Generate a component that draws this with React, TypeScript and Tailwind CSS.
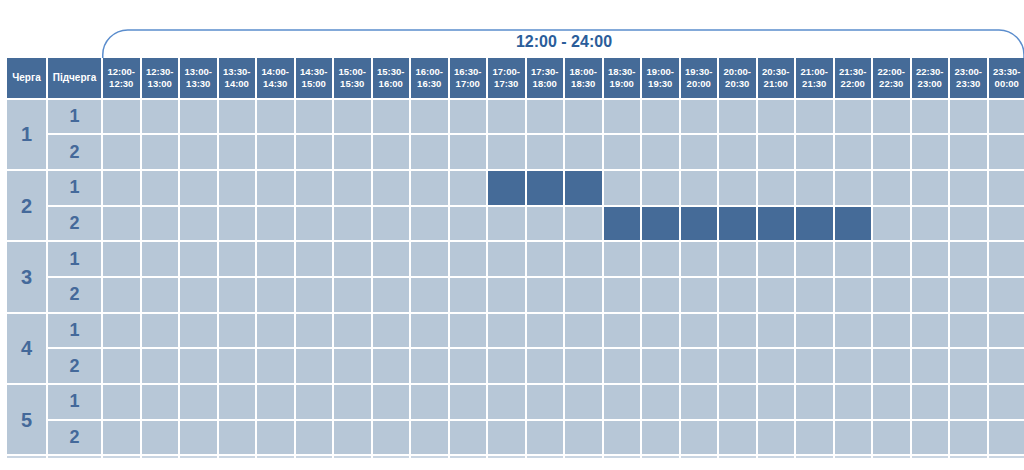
import React from "react";

const times = [
  "12:00", "12:30", "13:00", "13:30", "14:00", "14:30", "15:00", "15:30",
  "16:00", "16:30", "17:00", "17:30", "18:00", "18:30", "19:00", "19:30",
  "20:00", "20:30", "21:00", "21:30", "22:00", "22:30", "23:00", "23:30", "00:00",
];

const dark: Record<string, number[]> = {
  "2-1": [10, 11, 12],
  "2-2": [13, 14, 15, 16, 17, 18, 19],
};

export default function App() {
  const cells: React.ReactNode[] = [];
  cells.push(
    <div key="h-q" className="bg-[#456b98] text-white font-bold text-[10px] flex items-center justify-center">Черга</div>
  );
  cells.push(
    <div key="h-s" className="bg-[#456b98] text-white font-bold text-[10px] flex items-center justify-center">Підчерга</div>
  );
  for (let i = 0; i < 24; i++) {
    cells.push(
      <div key={"h" + i} className="bg-[#456b98] text-white font-bold text-[9.5px] leading-[12px] flex flex-col items-center justify-center">
        <span>{times[i]}-</span>
        <span>{times[i + 1]}</span>
      </div>
    );
  }
  for (let q = 1; q <= 5; q++) {
    for (let s = 1; s <= 2; s++) {
      if (s === 1) {
        cells.push(
          <div key={`q${q}`} className="row-span-2 bg-[#b7c7d7] text-[#44699a] font-bold text-[20px] flex items-center justify-center">{q}</div>
        );
      }
      cells.push(
        <div key={`s${q}-${s}`} className="bg-[#b7c7d7] text-[#44699a] font-bold text-[18px] flex items-center justify-center">{s}</div>
      );
      const d = dark[`${q}-${s}`] || [];
      for (let i = 0; i < 24; i++) {
        cells.push(
          <div key={`c${q}-${s}-${i}`} className={d.includes(i) ? "bg-[#456b98]" : "bg-[#b7c7d7]"} />
        );
      }
    }
  }
  for (let i = 0; i < 26; i++) {
    cells.push(<div key={"b" + i} className="bg-[#c9d5e2]" />);
  }

  return (
    <div className="w-[1024px] h-[470px] overflow-hidden bg-white font-['Liberation_Sans',Arial,sans-serif]">
      <div className="relative ml-[102px] w-[924px] h-[58px] flex justify-center pt-[33px]">
        <svg className="absolute left-0 top-0" width="924" height="58" viewBox="0 0 924 58" fill="none">
          <path d="M0.75 58 V55 A25 25 0 0 1 25.75 30 H897 A25 25 0 0 1 922 55 V58" stroke="#5b8dcd" strokeWidth="1.5" />
        </svg>
        <span className="relative text-[16px] leading-[18px] font-bold text-[#2b5d9a]">12:00 - 24:00</span>
      </div>
      <div className="ml-[7px] grid gap-[2px] grid-cols-[39px_53px_repeat(24,36.5px)] grid-rows-[39.5px_repeat(10,33.7px)_2px]">
        {cells}
      </div>
    </div>
  );
}
